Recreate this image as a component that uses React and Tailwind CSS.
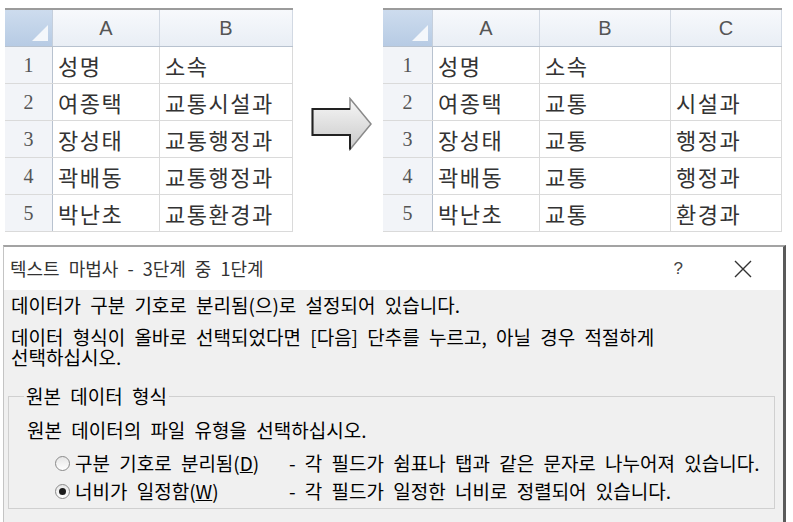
import React from "react";

const FONT = "font-['Noto_Sans_CJK_KR','Noto_Sans',sans-serif]";

function Corner() {
  return (
    <div className="h-full bg-gradient-to-b from-[#cddcee] to-[#b7cbe4] border-r border-[#c5cfdc] flex items-end justify-end pr-[4px] pb-[5px]">
      <svg width="16" height="16" viewBox="0 0 16 16">
        <polygon points="16,0 16,16 0,16" fill="#f4f7fb" />
      </svg>
    </div>
  );
}

function Sheet({ numWidth, cols, rows }) {
  const template = [numWidth, ...cols.map(c => c.w)].map(w => `${w}px`).join(" ");
  return (
    <div className="border-t-[2px] border-[#9b9b9b]">
      <div className="grid h-[37px] border-b border-[#b8c2cf]" style={{ gridTemplateColumns: template }}>
        <Corner />
        {cols.map(c => (
          <div
            key={c.label}
            className="bg-gradient-to-b from-[#f7f9fc] to-[#e9eef5] border-r border-[#d2d9e3] flex items-center justify-center text-[20px] text-[#555] font-['Liberation_Sans',sans-serif]"
          >
            {c.label}
          </div>
        ))}
      </div>
      {rows.map((r, i) => (
        <div
          key={i}
          className="grid h-[37px] border-b border-[#dadada]"
          style={{ gridTemplateColumns: template }}
        >
          <div className="bg-[#f2f4f8] border-r border-[#b8c2cf] flex items-center justify-center text-[20px] text-[#555] font-['Liberation_Serif',serif]">
            {i + 1}
          </div>
          {r.map((v, j) => (
            <div
              key={j}
              className="border-r border-[#dadada] flex items-center pl-[5px] text-[22px] tracking-[1.5px] text-[#333] leading-none"
            >
              {v}
            </div>
          ))}
        </div>
      ))}
    </div>
  );
}

function Arrow() {
  return (
    <svg width="62" height="54" viewBox="0 0 62 54">
      <defs>
        <linearGradient id="ag" x1="0" y1="0" x2="0" y2="1">
          <stop offset="0" stopColor="#f7f7f7" />
          <stop offset="1" stopColor="#c9c9c9" />
        </linearGradient>
      </defs>
      <path
        d="M1.5 12 L39 12 L39 1.5 L60 27 L39 52.5 L39 38 L1.5 38 Z"
        fill="url(#ag)"
        stroke="#8a8a8a"
        strokeWidth="1.5"
        strokeLinejoin="miter"
      />
      <path d="M39 12 L1.5 12 L1.5 38 L39 38 L39 52.5" fill="none" stroke="#222" strokeWidth="2" />
    </svg>
  );
}

function Radio({ checked }) {
  return (
    <span className="w-[15px] h-[15px] rounded-full border border-[#8a8a8a] bg-gradient-to-b from-[#e6e6e6] to-white flex items-center justify-center shrink-0">
      {checked && <span className="w-[7px] h-[7px] rounded-full bg-[#1b1b1b]" />}
    </span>
  );
}

export default function App() {
  const left = [
    ["성명", "소속"],
    ["여종택", "교통시설과"],
    ["장성태", "교통행정과"],
    ["곽배동", "교통행정과"],
    ["박난초", "교통환경과"],
  ];
  const right = [
    ["성명", "소속", ""],
    ["여종택", "교통", "시설과"],
    ["장성태", "교통", "행정과"],
    ["곽배동", "교통", "행정과"],
    ["박난초", "교통", "환경과"],
  ];

  return (
    <div className={`w-[793px] h-[522px] bg-white overflow-hidden ${FONT}`}>
      <div className="h-[245px] flex items-start pt-[8px] pl-[5px]">
        <Sheet numWidth={48} cols={[{ label: "A", w: 107 }, { label: "B", w: 133 }]} rows={left} />
        <div className="w-[90px] pl-[18px] pt-[89px]">
          <Arrow />
        </div>
        <Sheet
          numWidth={50}
          cols={[{ label: "A", w: 107 }, { label: "B", w: 131 }, { label: "C", w: 111 }]}
          rows={right}
        />
      </div>

      <div className="ml-[3px] w-[783px] h-[277px] border-t-[2px] border-l border-r-[3px] border-t-[#a3a3a3] border-l-[#c4c4c4] border-r-[#5a5a5a] flex flex-col [word-spacing:5px]">
        <div className="h-[43px] bg-white flex items-center pl-[6px] pr-[30px] text-[18px] text-[#333]">
          <span className="flex-1">텍스트 마법사 - 3단계 중 1단계</span>
          <span className="text-[17px] text-[#444] font-['Liberation_Sans',sans-serif] mr-[50px]">?</span>
          <svg width="20" height="20" viewBox="0 0 20 20">
            <path d="M2 2 L18 18 M18 2 L2 18" stroke="#333" strokeWidth="1.4" />
          </svg>
        </div>
        <div className="flex-1 bg-[#f0f0f0] text-[19px] text-black pl-[7px]">
          <div className="mt-[4px] leading-[22px]">데이터가 구분 기호로 분리됨(으)로 설정되어 있습니다.</div>
          <div className="mt-[11px] leading-[20px]">
            데이터 형식이 올바로 선택되었다면 [다음] 단추를 누르고, 아닐 경우 적절하게
          </div>
          <div className="leading-[20px]">선택하십시오.</div>
          <fieldset className="mt-[19px] mr-[8px] -ml-[3px] border border-[#d0d0d0] pl-[18px] pb-[6px]">
            <legend className="-ml-[3px] px-[2px] leading-[20px]">원본 데이터 형식</legend>
            <div className="mt-[13px] leading-[22px]">원본 데이터의 파일 유형을 선택하십시오.</div>
            <div className="mt-[11px] flex items-center h-[22px] pl-[28px]">
              <Radio />
              <span className="ml-[5px] w-[214px]">
                구분 기호로 분리됨(<span className="underline">D</span>)
              </span>
              <span>- 각 필드가 쉼표나 탭과 같은 문자로 나누어져 있습니다.</span>
            </div>
            <div className="mt-[6px] flex items-center h-[22px] pl-[28px]">
              <Radio checked />
              <span className="ml-[5px] w-[214px]">
                너비가 일정함(<span className="underline">W</span>)
              </span>
              <span>- 각 필드가 일정한 너비로 정렬되어 있습니다.</span>
            </div>
          </fieldset>
        </div>
      </div>
    </div>
  );
}
